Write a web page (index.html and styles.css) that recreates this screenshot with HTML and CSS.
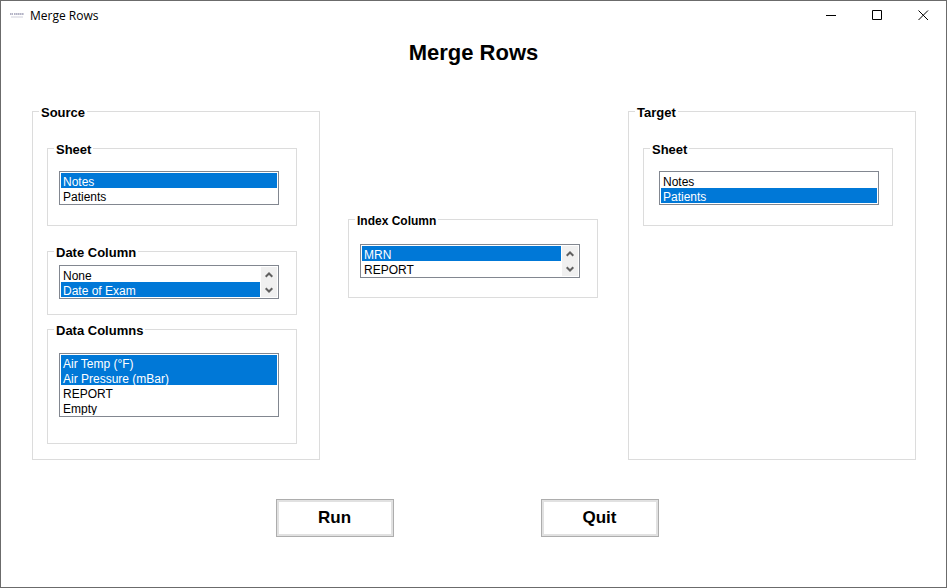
FILE: index.html
```html
<!DOCTYPE html>
<html lang="en">
<head>
<meta charset="utf-8">
<title>Merge Rows</title>
<link rel="stylesheet" href="styles.css">
</head>
<body>
<div class="window">
  <header class="titlebar">
    <svg class="app-icon" width="14" height="7" viewBox="0 0 14 7" aria-hidden="true">
      <path d="M0 2h3M4 2h10" stroke="#b4b4c6" stroke-width="2" stroke-dasharray="1.6 .4"/>
      <path d="M1 5h12" stroke="#cfcfda" stroke-width="1"/>
    </svg>
    <span class="caption">Merge Rows</span>
    <div class="controls">
      <button type="button" aria-label="Minimize"><svg width="11" height="11"><path d="M0 5.5h10"/></svg></button>
      <button type="button" aria-label="Maximize"><svg width="11" height="11"><path d="M.5 .5h9v9h-9z"/></svg></button>
      <button type="button" aria-label="Close"><svg width="11" height="11"><path d="M.5 .5l9.5 9.5M10 .5L.5 10"/></svg></button>
    </div>
  </header>
  <h1>Merge Rows</h1>
  <main class="columns">
    <fieldset class="panel">
      <legend>Source</legend>
      <fieldset class="group sheet">
        <legend id="source-sheet">Sheet</legend>
        <div class="listbox">
          <select size="2" aria-labelledby="source-sheet">
            <option selected>Notes</option>
            <option>Patients</option>
          </select>
        </div>
      </fieldset>
      <fieldset class="group date">
        <legend id="date-column">Date Column</legend>
        <div class="listbox">
          <select size="2" aria-labelledby="date-column">
            <option>None</option>
            <option selected>Date of Exam</option>
          </select>
          <div class="scroller">
            <button type="button" aria-label="Scroll up"><svg width="8" height="6"><path d="M.7 4.8L4 1.5l3.3 3.3"/></svg></button>
            <button type="button" aria-label="Scroll down"><svg width="8" height="6"><path d="M.7 1.2L4 4.5l3.3-3.3"/></svg></button>
          </div>
        </div>
      </fieldset>
      <fieldset class="group data">
        <legend id="data-columns">Data Columns</legend>
        <div class="listbox">
          <select size="4" multiple aria-labelledby="data-columns">
            <option selected>Air Temp (°F)</option>
            <option selected>Air Pressure (mBar)</option>
            <option>REPORT</option>
            <option>Empty</option>
          </select>
        </div>
      </fieldset>
    </fieldset>
    <fieldset class="group index">
      <legend id="index-column">Index Column</legend>
      <div class="listbox">
        <select size="2" aria-labelledby="index-column">
          <option selected>MRN</option>
          <option>REPORT</option>
        </select>
        <div class="scroller">
          <button type="button" aria-label="Scroll up"><svg width="8" height="6"><path d="M.7 4.8L4 1.5l3.3 3.3"/></svg></button>
          <button type="button" aria-label="Scroll down"><svg width="8" height="6"><path d="M.7 1.2L4 4.5l3.3-3.3"/></svg></button>
        </div>
      </div>
    </fieldset>
    <fieldset class="panel">
      <legend>Target</legend>
      <fieldset class="group sheet target-sheet">
        <legend id="target-sheet">Sheet</legend>
        <div class="listbox">
          <select size="2" aria-labelledby="target-sheet">
            <option>Notes</option>
            <option selected>Patients</option>
          </select>
        </div>
      </fieldset>
    </fieldset>
  </main>
  <footer class="actions">
    <button type="button">Run</button>
    <button type="button">Quit</button>
  </footer>
</div>
</body>
</html>
```

FILE: styles.css
```css
* {
  box-sizing: border-box;
}

body {
  margin: 0;
  background: #fff;
  color: #000;
  font-family: "Liberation Sans", Arial, sans-serif;
  font-size: 13px;
}

.window {
  min-height: 100vh;
  border: 1px solid #6b6b6b;
}

button {
  font: inherit;
  color: inherit;
  padding: 0;
}

.titlebar {
  display: flex;
  align-items: center;
  height: 28px;
  padding-left: 9px;
  gap: 6px;
}

.caption {
  flex: 1;
  font-family: "Open Sans", "Noto Sans", sans-serif;
  font-size: 12px;
}

.controls {
  display: flex;
}

.controls button {
  display: grid;
  place-items: center;
  width: 46px;
  height: 28px;
  border: 0;
  background: none;
}

.controls path {
  fill: none;
  stroke: #000;
}

h1 {
  margin: 10px 0 0;
  font-size: 22px;
  line-height: 28px;
  text-align: center;
}

.columns {
  display: grid;
  grid-template-columns: 288fr 252fr 288fr;
  gap: 28px;
  margin-top: 36px;
  padding: 0 30px 0 31px;
}

fieldset {
  min-width: 0;
  margin: 0;
  border: 1px solid #dcdcdc;
}

legend {
  margin-left: -5px;
  padding: 3px 2px 0;
  font-size: 13px;
  font-weight: bold;
  line-height: 14px;
}

.panel {
  padding: 20px 22px 15px 14px;
}

.panel > legend {
  margin-left: -8px;
}

.group {
  padding: 14px 17px 20px 11px;
}

.target-sheet {
  padding-left: 15px;
  padding-right: 13px;
}

.target-sheet legend {
  margin-left: -9px;
}

.date {
  margin-top: 17px;
  padding-top: 5px;
  padding-bottom: 15px;
}

.data {
  margin-top: 6px;
  padding-top: 15px;
  padding-bottom: 26px;
}

.index {
  align-self: start;
  margin: 108px 2px 0 0;
  padding-top: 16px;
  padding-bottom: 19px;
}

.index legend {
  font-size: 12px;
}

.listbox {
  display: flex;
  gap: 1px;
  padding: 1px;
  border: 1px solid #828790;
}

select {
  flex: 1;
  min-width: 0;
  margin: 0;
  padding: 0;
  border: 0;
  border-radius: 0;
  outline: 0;
  background: #fff;
  color: #000;
  font: 12px/15px "Liberation Sans", Arial, sans-serif;
  overflow: hidden;
  scrollbar-width: none;
}

option {
  min-height: 15px;
  height: 15px;
  padding: 2px 2px 0;
  line-height: 13px;
}

option:checked {
  background: linear-gradient(#0078d7, #0078d7);
  -webkit-text-fill-color: #fff;
}

.scroller {
  display: flex;
  flex-direction: column;
  width: 16px;
  background: #f0f0f0;
}

.scroller button {
  display: grid;
  flex: 1;
  place-items: center;
  border: 0;
  background: none;
}

.scroller path {
  fill: none;
  stroke: #606060;
  stroke-width: 2;
}

.actions {
  display: flex;
  justify-content: center;
  gap: 147px;
  margin-top: 39px;
  padding-right: 13px;
}

.actions button {
  width: 118px;
  height: 38px;
  border: 1px solid #adadad;
  background: #fff;
  box-shadow: inset 0 0 0 2px #e1e1e1;
  font-size: 17px;
  font-weight: bold;
}
```
